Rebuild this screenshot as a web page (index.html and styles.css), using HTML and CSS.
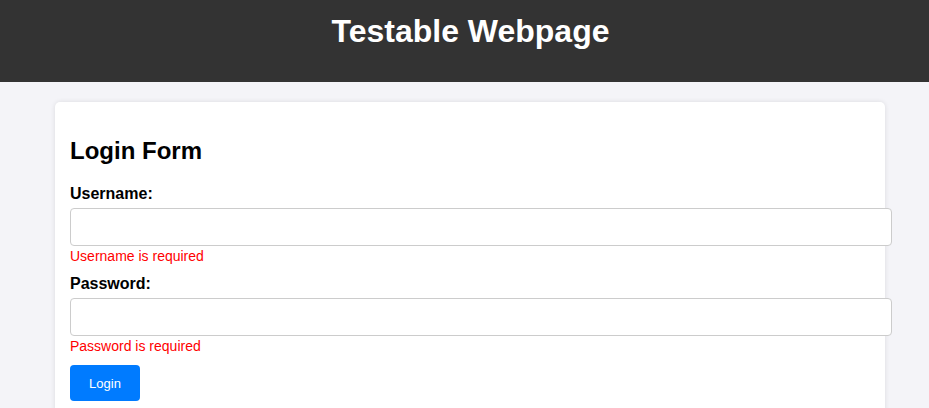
FILE: index.html
```html
<!DOCTYPE html>
<html lang="en">
<head>
<meta charset="utf-8">
<title>Testable Webpage</title>
<link rel="stylesheet" href="styles.css">
</head>
<body>
<header class="site-header">
  <h1 class="site-title">Testable Webpage</h1>
</header>
<main class="main">
  <section class="card">
    <h2 class="card-title">Login Form</h2>
    <form class="form">
      <div class="form-group">
        <label class="label" for="username">Username:</label>
        <input class="input" id="username" type="text">
        <div class="error">Username is required</div>
      </div>
      <div class="form-group">
        <label class="label" for="password">Password:</label>
        <input class="input" id="password" type="password">
        <div class="error">Password is required</div>
      </div>
      <button class="btn" type="button">Login</button>
    </form>
  </section>
</main>
</body>
</html>
```
FILE: styles.css
```css
html, body {
  margin: 0;
  padding: 0;
}
body {
  background: #f4f4f8;
  font-family: "Liberation Sans", Arial, sans-serif;
  color: #000;
  height: 408px;
  overflow: hidden;
}
.site-header {
  background: #333333;
  color: #fff;
  text-align: center;
  height: 82px;
  box-sizing: border-box;
  padding: 13px 0 0 12px;
}
.site-title {
  margin: 0;
  font-size: 32px;
  line-height: 37px;
  font-weight: bold;
}
.main {
  padding: 20px 44px 0 55px;
}
.card {
  width: 800px;
  background: #fff;
  padding: 15px;
  border-radius: 5px;
  box-shadow: 0 0 5px rgba(0, 0, 0, 0.1);
}
.card-title {
  font-size: 24px;
  line-height: 28px;
  margin: 20px 0 20px;
}
.form-group {
  margin-bottom: 11px;
}
.label {
  display: block;
  font-weight: bold;
  font-size: 16px;
  line-height: 18px;
  margin-bottom: 5px;
}
.input {
  display: block;
  box-sizing: content-box;
  width: 800px;
  height: 16px;
  padding: 10px;
  border: 1px solid #cccccc;
  border-radius: 4px;
  font-family: "Liberation Sans", Arial, sans-serif;
  font-size: 14px;
  background: #fff;
  margin: 0;
}
.error {
  color: #ff0000;
  font-size: 14px;
  line-height: 16px;
  margin-top: 2px;
}
.btn {
  display: block;
  background: #007bff;
  color: #fff;
  border: none;
  border-radius: 4px;
  height: 36px;
  width: 70px;
  padding: 0;
  font-family: "Liberation Sans", Arial, sans-serif;
  font-size: 13px;
  cursor: pointer;
}
```
